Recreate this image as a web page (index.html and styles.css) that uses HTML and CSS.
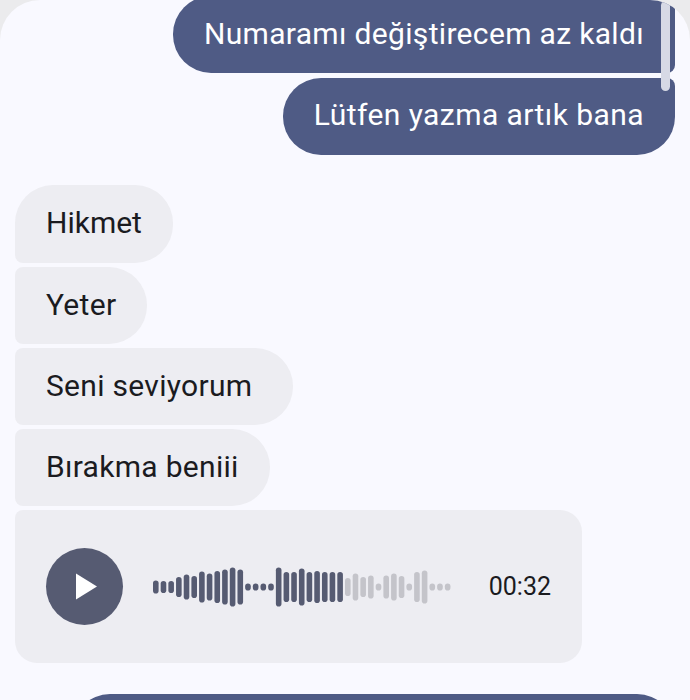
FILE: index.html
```html
<!DOCTYPE html>
<html lang="tr">
<head>
<meta charset="utf-8">
<title>Mesajlar</title>
<link rel="stylesheet" href="styles.css">
</head>
<body>
<main class="screen">
  <div class="scrollbar"></div>
  <section class="group sent first-group">
    <div class="bubble out out-top">Numaramı değiştirecem az kaldı</div>
    <div class="bubble out out-bottom">Lütfen yazma artık bana</div>
  </section>
  <section class="group received">
    <div class="bubble in in-top">Hikmet</div>
    <div class="bubble in in-mid">Yeter</div>
    <div class="bubble in in-mid wide">Seni seviyorum</div>
    <div class="bubble in in-mid">Bırakma beniii</div>
    <div class="audio">
      <button class="play" aria-label="Oynat">
        <svg width="21" height="27" viewBox="0 0 21 27"><path d="M0 0.5 21 13.5 0 26.5Z" fill="#fff"/></svg>
      </button>
      <svg class="wave" width="298" height="40" viewBox="0 0 298 40">
        <g class="played">
          <rect x="0" y="13.5" width="5.6" height="13" rx="2.8"/>
          <rect x="7.68" y="14" width="5.6" height="12" rx="2.8"/>
          <rect x="15.36" y="14" width="5.6" height="12" rx="2.8"/>
          <rect x="23.04" y="10" width="5.6" height="20" rx="2.8"/>
          <rect x="30.72" y="7.5" width="5.6" height="25" rx="2.8"/>
          <rect x="38.4" y="9" width="5.6" height="22" rx="2.8"/>
          <rect x="46.08" y="4.5" width="5.6" height="31" rx="2.8"/>
          <rect x="53.76" y="6.5" width="5.6" height="27" rx="2.8"/>
          <rect x="61.44" y="4" width="5.6" height="32" rx="2.8"/>
          <rect x="69.12" y="2.5" width="5.6" height="35" rx="2.8"/>
          <rect x="76.8" y="0.5" width="5.6" height="39" rx="2.8"/>
          <rect x="84.48" y="2.5" width="5.6" height="35" rx="2.8"/>
          <rect x="92.16" y="16.5" width="5.6" height="7" rx="2.8"/>
          <rect x="99.84" y="16.5" width="5.6" height="7" rx="2.8"/>
          <rect x="107.52" y="16.5" width="5.6" height="7" rx="2.8"/>
          <rect x="115.2" y="16.5" width="5.6" height="7" rx="2.8"/>
          <rect x="122.88" y="0.5" width="5.6" height="39" rx="2.8"/>
          <rect x="130.56" y="5" width="5.6" height="30" rx="2.8"/>
          <rect x="138.24" y="5" width="5.6" height="30" rx="2.8"/>
          <rect x="145.92" y="1.5" width="5.6" height="37" rx="2.8"/>
          <rect x="153.6" y="5" width="5.6" height="30" rx="2.8"/>
          <rect x="161.28" y="4" width="5.6" height="32" rx="2.8"/>
          <rect x="168.96" y="5" width="5.6" height="30" rx="2.8"/>
          <rect x="176.64" y="5" width="5.6" height="30" rx="2.8"/>
          <rect x="184.32" y="5" width="5.6" height="30" rx="2.8"/>
        </g>
        <g class="rest">
          <rect x="192" y="11" width="5.6" height="18" rx="2.8"/>
          <rect x="199.68" y="6.5" width="5.6" height="27" rx="2.8"/>
          <rect x="207.36" y="10" width="5.6" height="20" rx="2.8"/>
          <rect x="215.04" y="8.5" width="5.6" height="23" rx="2.8"/>
          <rect x="222.72" y="16.5" width="5.6" height="7" rx="2.8"/>
          <rect x="230.4" y="8.5" width="5.6" height="23" rx="2.8"/>
          <rect x="238.08" y="6.5" width="5.6" height="27" rx="2.8"/>
          <rect x="245.76" y="9" width="5.6" height="22" rx="2.8"/>
          <rect x="253.44" y="16.5" width="5.6" height="7" rx="2.8"/>
          <rect x="261.12" y="5" width="5.6" height="30" rx="2.8"/>
          <rect x="268.8" y="3.5" width="5.6" height="33" rx="2.8"/>
          <rect x="276.48" y="16.5" width="5.6" height="7" rx="2.8"/>
          <rect x="284.16" y="16.5" width="5.6" height="7" rx="2.8"/>
          <rect x="291.84" y="16.5" width="5.6" height="7" rx="2.8"/>
        </g>
      </svg>
      <span class="time">00:32</span>
    </div>
  </section>
  <section class="group sent last-group">
    <div class="bubble out out-next"></div>
  </section>
</main>
</body>
</html>
```
FILE: styles.css
```css
* { box-sizing: border-box; }
html, body { margin: 0; height: 100%; }
body {
  background: #ebebed;
  font-family: Roboto, "Noto Sans", sans-serif;
  overflow: hidden;
}
.screen {
  position: relative;
  height: 700px;
  overflow: hidden;
  background: #f9f9ff;
  border-radius: 40px 40px 0 0;
  padding: 0 15px;
}
.scrollbar {
  position: absolute;
  top: 1px;
  right: 20px;
  width: 9px;
  height: 90px;
  background: #d7d9e5;
  border-radius: 4.5px;
}
.group { display: flex; flex-direction: column; gap: 4px; }
.sent { align-items: flex-end; }
.first-group { margin-top: -4px; gap: 5px; }
.received { align-items: flex-start; margin-top: 30px; }
.last-group { margin-top: 31px; }
.bubble {
  height: 77px;
  display: flex;
  align-items: center;
  font-size: 30px;
  font-weight: 400;
  line-height: 1;
  padding: 0 31px 2px;
  letter-spacing: 0.3px;
}
.out { background: #4f5b85; color: #fff; }
.in { background: #edEdf2; color: #1b1b1f; }
.out-top { border-radius: 38px 8px 8px 38px; letter-spacing: 0.33px; }
.out-bottom { border-radius: 38px 8px 38px 38px; padding-bottom: 4px; letter-spacing: 0.43px; }
.in-top { height: 78px; border-radius: 38px 38px 38px 8px; letter-spacing: 0; }
.in-mid { border-radius: 8px 38px 38px 8px; }
.wide { padding-right: 41px; }
.out-next { width: 603px; border-radius: 38px 38px 8px 38px; }
.audio {
  width: 567px;
  height: 153px;
  padding: 0 31px;
  display: flex;
  align-items: center;
  background: #edEdf2;
  border-radius: 8px 22px 22px 22px;
}
.play {
  width: 77px;
  height: 77px;
  flex: none;
  padding: 0 0 0 4px;
  border: 0;
  border-radius: 50%;
  background: #565b72;
  display: flex;
  align-items: center;
  justify-content: center;
}
.wave { flex: none; margin-left: 30px; }
.played { fill: #565b72; }
.rest { fill: #c4c4ca; }
.time { margin-left: auto; font-size: 25px; color: #1b1b1f; }
```
